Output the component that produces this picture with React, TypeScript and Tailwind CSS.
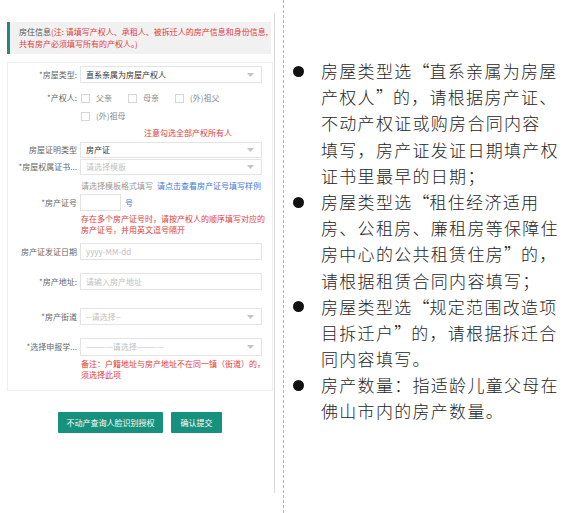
import React from 'react';

const cjk = { fontFamily: '"Noto Sans CJK SC", "Noto Sans", sans-serif' };

function Caret() {
  return (
    <svg width="7" height="4" viewBox="0 0 7 4" className="ml-auto shrink-0">
      <path d="M0 0 L7 0 L3.5 4 Z" fill="#c4c4c4" />
    </svg>
  );
}

function Field({
  value,
  placeholder,
  select,
  width = 'w-[182px]',
}: {
  value?: string;
  placeholder?: string;
  select?: boolean;
  width?: string;
}) {
  return (
    <div
      className={`flex h-full ${width} items-center border border-[#e4e4e4] bg-white pl-[5px] pr-[7px] text-[8px]`}
    >
      {value ? (
        <span className="text-[#333]">{value}</span>
      ) : (
        <span className="text-[#c2c2c2]">{placeholder}</span>
      )}
      {select && <Caret />}
    </div>
  );
}

function Row({ label, h = 'h-[17px]', children }: { label: string; h?: string; children: React.ReactNode }) {
  return (
    <div className={`flex ${h} items-center`}>
      <div className="w-[69px] shrink-0 whitespace-nowrap text-right text-[8px] text-[#666]">{label}</div>
      <div className="ml-[3px] flex h-full items-center">{children}</div>
    </div>
  );
}

function Check({ label }: { label: string }) {
  return (
    <div className="flex w-[47px] items-center">
      <span className="h-[9px] w-[9px] shrink-0 border border-[#d6d6d6] bg-white" />
      <span className="ml-[6px] whitespace-nowrap text-[8px] text-[#888]">{label}</span>
    </div>
  );
}

const Q1 = () => <span className="inline-block w-[17px] text-right">“</span>;
const Q2 = () => <span className="inline-block w-[17px] text-left">”</span>;

function Bullet({ lines }: { lines: React.ReactNode[] }) {
  return (
    <div className="flex">
      <div className="flex h-[26.2px] w-[37px] shrink-0 items-center pl-[9px]">
        <span className="h-[11px] w-[11px] rounded-full bg-[#111]" />
      </div>
      <div>
        {lines.map((l, i) => (
          <div key={i} className="h-[26.2px] whitespace-nowrap leading-[26.2px]">
            {l}
          </div>
        ))}
      </div>
    </div>
  );
}

export default function App() {
  return (
    <div className="flex h-[513px] w-[567px] overflow-hidden bg-white" style={cjk}>
      <div className="w-[283px] shrink-0">
        <div className="mt-[13px] h-[480px] w-[275px] border-r border-[#d8d8d8] pl-[7px] pt-[9px]">
          {/* header */}
          <div className="h-[32px] w-[264px] border-l-[3px] border-[#1f8a78] bg-[#f1f1f1] pl-[9px] pt-[4px] text-[8px] leading-[12px]">
            <span className="text-[#555]">房住信息</span>
            <span className="text-[#e23b3b]">
              (注: 请填写产权人、承租人、被拆迁人的房产信息和身份信息,
              <br />
              共有房产必须填写所有的产权人。)
            </span>
          </div>

          {/* form card */}
          <div className="mt-[8px] w-[266px] border border-[#efefef] pb-[10px] pt-[3px]">
            <Row label="*房屋类型:">
              <Field value="直系亲属为房屋产权人" select />
            </Row>

            <div className="mt-[6px] flex">
              <div className="w-[69px] shrink-0 pt-[4px] text-right text-[8px] leading-[10px] text-[#666]">*产权人:</div>
              <div className="ml-[4px]">
                <div className="flex h-[18px] items-center">
                  <Check label="父亲" />
                  <Check label="母亲" />
                  <Check label="(外)祖父" />
                </div>
                <div className="flex h-[18px] items-center">
                  <Check label="(外)祖母" />
                </div>
              </div>
            </div>

            <div className="flex h-[15px] items-center pl-[136px] text-[8px] text-[#e23b3b]">注意勾选全部产权所有人</div>

            <div className="mt-[2px]">
              <Row label="房屋证明类型" h="h-[16px]">
                <Field value="房产证" select />
              </Row>
            </div>
            <div className="mt-[1px]">
              <Row label="*房屋权属证书..." h="h-[16px]">
                <Field placeholder="请选择模板" select />
              </Row>
            </div>

            <div className="mt-[4px] flex h-[14px] items-center pl-[73px] text-[8px]">
              <span className="text-[#999]">请选择模板格式填写</span>
              <span className="ml-[4px] text-[#3a7bd5]">请点击查看房产证号填写样例</span>
            </div>

            <div className="mt-[1px]">
              <Row label="*房产证号">
                <Field width="w-[41px]" />
                <span className="ml-[4px] text-[8px] text-[#3a7bd5]">号</span>
              </Row>
            </div>

            <div className="mt-[3px] pl-[73px] text-[8px] leading-[10.5px] text-[#e23b3b]">
              存在多个房产证号时，请按产权人的顺序填写对应的
              <br />
              房产证号，并用英文逗号隔开
            </div>

            <div className="mt-[8px]">
              <Row label="房产证发证日期">
                <Field placeholder="yyyy-MM-dd" />
              </Row>
            </div>

            <div className="mt-[13px]">
              <Row label="*房产地址:">
                <Field placeholder="请输入房产地址" />
              </Row>
            </div>

            <div className="mt-[18px]">
              <Row label="*房产街道">
                <Field placeholder="--请选择--" select />
              </Row>
            </div>

            <div className="mt-[13px]">
              <Row label="*选择申报学..." h="h-[18px]">
                <Field placeholder="————请选择————" select />
              </Row>
            </div>

            <div className="mt-[2px] pl-[73px] text-[8px] leading-[11px] text-[#e23b3b]">
              备注：户籍地址与房产地址不在同一镇（街道）的，
              <br />
              须选择此项
            </div>
          </div>

          {/* buttons */}
          <div className="mt-[21px] flex w-[266px] justify-center gap-[8px]">
            <button className="h-[21px] w-[105px] rounded-[1px] bg-[#16917e] text-[8px] text-white">
              不动产查询人脸识别授权
            </button>
            <button className="h-[21px] w-[51px] rounded-[1px] bg-[#16917e] text-[8px] text-white">确认提交</button>
          </div>
        </div>
      </div>

      {/* notes */}
      <div className="h-full flex-1 border-l border-dashed border-[#b5b5b5] pt-[58px] text-[17px] font-light tracking-[1.3px] text-[#262626]">
        <Bullet
          lines={[
            <>房屋类型选<Q1 />直系亲属为房屋</>,
            <>产权人<Q2 />的，请根据房产证、</>,
            <>不动产权证或购房合同内容</>,
            <>填写，房产证发证日期填产权</>,
            <>证书里最早的日期；</>,
          ]}
        />
        <Bullet
          lines={[
            <>房屋类型选<Q1 />租住经济适用</>,
            <>房、公租房、廉租房等保障住</>,
            <>房中心的公共租赁住房<Q2 />的，</>,
            <>请根据租赁合同内容填写；</>,
          ]}
        />
        <Bullet
          lines={[
            <>房屋类型选<Q1 />规定范围改造项</>,
            <>目拆迁户<Q2 />的，请根据拆迁合</>,
            <>同内容填写。</>,
          ]}
        />
        <Bullet lines={[<>房产数量：指适龄儿童父母在</>, <>佛山市内的房产数量。</>]} />
      </div>
    </div>
  );
}
